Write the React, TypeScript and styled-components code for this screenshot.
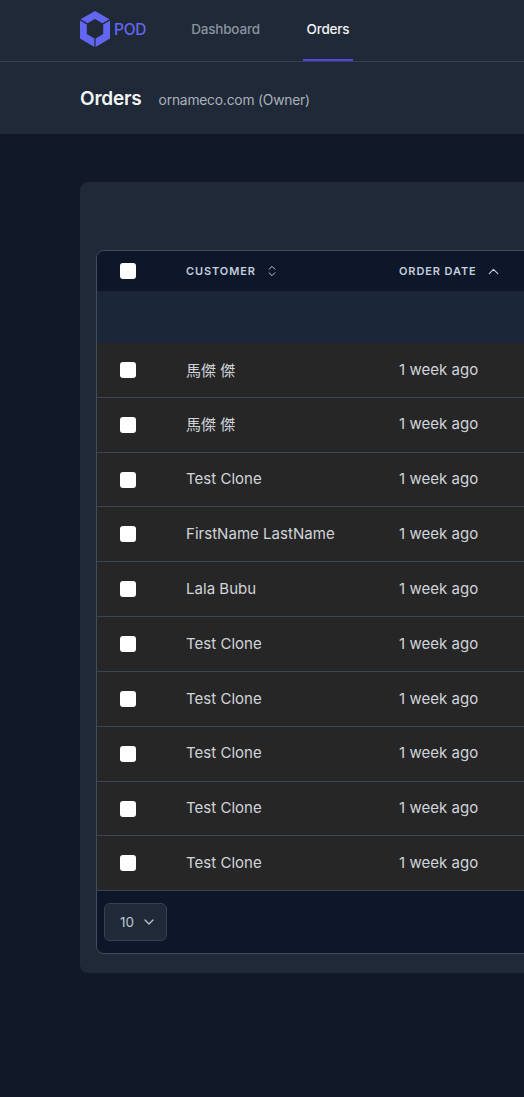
import styled, { createGlobalStyle } from "styled-components";
import { ChevronDown, ChevronUp, ChevronsUpDown } from "lucide-react";

const GlobalStyle = createGlobalStyle`
  html, body {
    margin: 0;
    padding: 0;
    background: #111827;
  }
  body {
    font-family: "Inter", "Noto Sans CJK TC", sans-serif;
    overflow: hidden;
  }
`;

const Page = styled.div`
  width: 524px;
  height: 1097px;
  overflow: hidden;
  background: #111827;
`;

// top bar //
const TopBar = styled.header`
  height: 61px;
  padding-left: 80px;
  display: flex;
  background: #1f2937;
  border-bottom: 1px solid #374151;
`;
const Brand = styled.div`
  display: flex;
  align-items: center;
  gap: 4px;
  width: 108px;
  margin-top: -4px;
`;
const BrandName = styled.span`
  font-size: 15.5px;
  font-weight: 500;
  letter-spacing: -0.3px;
  margin-top: 2px;
  color: #6366f1;
`;
const NavLink = styled.a<{ $active?: boolean }>`
  display: flex;
  align-items: center;
  justify-content: center;
  padding-bottom: 2px;
  box-sizing: border-box;
  width: ${(p) => (p.$active ? "50px" : "75px")};
  margin-left: ${(p) => (p.$active ? "40px" : "0")};
  height: 61px;
  font-size: 13.5px;
  font-weight: 500;
  letter-spacing: -0.2px;
  color: ${(p) => (p.$active ? "#f3f4f6" : "#8a93a1")};
  border-bottom: 2px solid ${(p) => (p.$active ? "#4f46e5" : "transparent")};
`;

// page title //
const TitleBar = styled.div`
  height: 72px;
  padding-left: 80px;
  display: flex;
  align-items: center;
  gap: 17px;
  background: #1f2937;
`;
const Title = styled.h1`
  margin: 0;
  font-size: 19px;
  font-weight: 600;
  letter-spacing: -0.2px;
  color: #f3f4f6;
`;
const Subtitle = styled.span`
  padding-top: 3px;
  font-size: 13.8px;
  letter-spacing: -0.2px;
  color: #aab2bd;
`;

// card with the table //
const Content = styled.main`
  padding: 48px 0 0 80px;
`;
const Card = styled.section`
  width: 640px;
  height: 791px;
  box-sizing: border-box;
  padding: 68px 16px 0;
  background: #1f2937;
  border-radius: 8px;
`;
const Table = styled.div`
  border: 1px solid #414c5c;
  border-radius: 8px;
  overflow: hidden;
`;
const Row = styled.div`
  display: grid;
  grid-template-columns: 89px 213px 1fr;
  align-items: center;
`;
const HeadRow = styled(Row)`
  height: 40px;
  background: #0d1729;
`;
const EmptyRow = styled.div`
  height: 52px;
  background: #1b2739;
`;
const BodyRow = styled(Row)`
  height: 54px;
  background: #262626;
  border-bottom: 1px solid #3b4554;
  &:nth-child(odd) {
    height: 53.7px;
  }
`;
const CheckCell = styled.div`
  padding-left: 23px;
  display: flex;
`;
const Checkbox = styled.span`
  width: 16px;
  height: 16px;
  background: #ffffff;
  border-radius: 3px;
`;
const HeadCell = styled.div<{ $gap: number }>`
  display: flex;
  align-items: center;
  gap: ${(p) => p.$gap}px;
  font-size: 11px;
  font-weight: 600;
  letter-spacing: 0.9px;
  color: #c3cede;

  svg {
    color: #c3cede;
  }
`;
const Cell = styled.div`
  font-size: 15px;
  letter-spacing: 0.03px;
  color: #d1d5db;
  padding-bottom: 1.6px;
`;
const TableFooter = styled.div`
  height: 62px;
  padding: 12px 7px 0;
  box-sizing: border-box;
  background: #0d1729;
`;
const PageSize = styled.button`
  width: 63px;
  height: 38px;
  padding: 0 0 0 15px;
  display: flex;
  align-items: center;
  justify-content: flex-start;
  gap: 7px;
  font-family: inherit;
  font-size: 13.5px;
  color: #bcc8d8;
  background: #1f2937;
  border: 1px solid #374151;
  border-radius: 6px;
`;

const Logo = () => (
  <svg width="30" height="36" viewBox="0 0 30 36" fill="#6366f1">
    <path d="M15 0 29.5 8.2 22.5 12.2 15 8 7.500 12.2 .5 8.200Z" />
    <path d="M0 9.500 6.800 13.500V23L14.400 27.500V36L0 27.500Z" />
    <path d="M30 9.500 23.200 13.500V23L15.600 27.500V36L30 27.500Z" />
  </svg>
);

const customers = [
  "馬傑 傑",
  "馬傑 傑",
  "Test Clone",
  "FirstName LastName",
  "Lala Bubu",
  "Test Clone",
  "Test Clone",
  "Test Clone",
  "Test Clone",
  "Test Clone",
];

const App = () => {
  return (
    <Page>
      <GlobalStyle />
      <TopBar>
        <Brand>
          <Logo />
          <BrandName>POD</BrandName>
        </Brand>
        <NavLink>Dashboard</NavLink>
        <NavLink $active>Orders</NavLink>
      </TopBar>
      <TitleBar>
        <Title>Orders</Title>
        <Subtitle>ornameco.com (Owner)</Subtitle>
      </TitleBar>
      <Content>
        <Card>
          <Table>
            <HeadRow>
              <CheckCell>
                <Checkbox />
              </CheckCell>
              <HeadCell $gap={9}>
                CUSTOMER
                <ChevronsUpDown size={14} strokeWidth={1.6} />
              </HeadCell>
              <HeadCell $gap={8}>
                ORDER DATE
                <ChevronUp size={17} strokeWidth={1.6} />
              </HeadCell>
            </HeadRow>
            <EmptyRow />
            {customers.map((name, i) => (
              <BodyRow key={i}>
                <CheckCell>
                  <Checkbox />
                </CheckCell>
                <Cell>{name}</Cell>
                <Cell>1 week ago</Cell>
              </BodyRow>
            ))}
            <TableFooter>
              <PageSize>
                10
                <ChevronDown size={16} strokeWidth={1.8} />
              </PageSize>
            </TableFooter>
          </Table>
        </Card>
      </Content>
    </Page>
  );
};

export default App;
